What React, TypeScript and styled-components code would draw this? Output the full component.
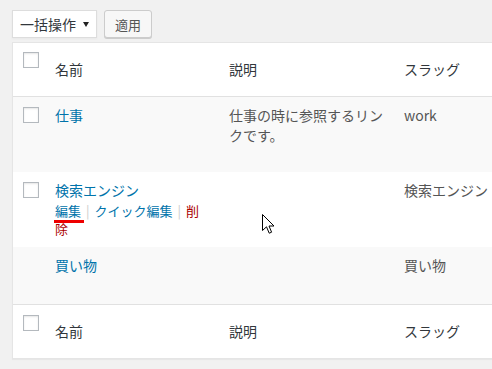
import React from "react";
import styled, { createGlobalStyle } from "styled-components";

const Global = createGlobalStyle`
  html, body {
    margin: 0;
    padding: 0;
    background: #f1f1f1;
    overflow: hidden;
  }
  body {
    font-family: "Noto Sans CJK JP", "Noto Sans", sans-serif;
    color: #444;
  }
`;

const Page = styled.div`
  position: relative;
  width: 492px;
  height: 369px;
  padding: 10px 0 0 12px;
  box-sizing: border-box;
`;

const Toolbar = styled.div`
  display: flex;
  align-items: center;
  gap: 7px;
  margin-bottom: 4px;
`;

const SelectBox = styled.div`
  box-sizing: border-box;
  width: 85px;
  height: 28px;
  display: flex;
  align-items: center;
  padding: 0 7px;
  background: #fff;
  border: 1px solid #ddd;
  box-shadow: 0 1px 2px rgba(0, 0, 0, 0.04);
  font-size: 14px;
  color: #32373c;
`;

const Caret = styled.span`
  margin-left: auto;
  width: 0;
  height: 0;
  border-left: 3.5px solid transparent;
  border-right: 3.5px solid transparent;
  border-top: 5px solid #222;
`;

const Button = styled.button`
  box-sizing: border-box;
  height: 28px;
  padding: 0 10px;
  font-family: inherit;
  font-size: 13px;
  color: #555;
  background: #f7f7f7;
  border: 1px solid #ccc;
  border-radius: 3px;
  box-shadow: 0 1px 0 #ccc;
`;

const Table = styled.table`
  width: 500px;
  table-layout: fixed;
  border-collapse: separate;
  border-spacing: 0;
  background: #fff;
  border: 1px solid #e5e5e5;
  box-shadow: 0 1px 1px rgba(0, 0, 0, 0.04);
`;

const HeadCell = styled.th<{ $w?: number; $foot?: boolean }>`
  box-sizing: border-box;
  width: ${(p) => (p.$w ? `${p.$w}px` : "auto")};
  padding: 16px 10px 17px;
  text-align: left;
  font-weight: 400;
  font-size: 14px;
  line-height: 20px;
  color: #32373c;
  white-space: nowrap;
  ${(p) =>
    p.$foot ? "border-top: 1px solid #e1e1e1;" : "border-bottom: 1px solid #e1e1e1;"}
`;

const CheckHead = styled(HeadCell)`
  vertical-align: top;
  padding: ${(p) => (p.$foot ? "10px" : "9px")} 0 0 10px;
`;

const Row = styled.tr<{ $alt?: boolean }>`
  background: ${(p) => (p.$alt ? "#f9f9f9" : "#fff")};
`;

const Cell = styled.td`
  box-sizing: border-box;
  vertical-align: top;
  padding: 8px 10px 9px;
  font-size: 14px;
  line-height: 20px;
  color: #555;
`;

const CheckCell = styled.td`
  box-sizing: border-box;
  vertical-align: top;
  padding: 10px 0 0 10px;
`;

const Checkbox = styled.span`
  display: block;
  box-sizing: border-box;
  width: 16px;
  height: 16px;
  background: #fff;
  border: 1px solid #b4b9be;
  box-shadow: inset 0 1px 2px rgba(0, 0, 0, 0.1);
`;

const NameLink = styled.a`
  color: #0073aa;
  text-decoration: none;
`;

const Actions = styled.div<{ $hidden?: boolean }>`
  visibility: ${(p) => (p.$hidden ? "hidden" : "visible")};
  padding-top: 2px;
  font-size: 13px;
  line-height: 18px;
  color: #ddd;
`;

const ActionLink = styled.a<{ $danger?: boolean; $marked?: boolean }>`
  position: relative;
  color: ${(p) => (p.$danger ? "#a00" : "#0073aa")};
  text-decoration: none;
  ${(p) =>
    p.$marked
      ? `display: inline-block;
  &::after {
    content: "";
    position: absolute;
    left: -1px;
    right: -3px;
    top: 18px;
    height: 3px;
    background: #e00;
  }`
      : ""}
`;

const Sep = styled.span`
  color: #ccc;
  padding: 0 5px 0 5px;
`;

const Cursor = styled.svg`
  position: absolute;
  left: 262px;
  top: 214px;
`;

type Term = {
  name: string;
  desc: string;
  slug: string;
  check: boolean;
  canDelete: boolean;
  showActions: boolean;
};

const terms: Term[] = [
  { name: "仕事", desc: "仕事の時に参照するリンクです。", slug: "work", check: true, canDelete: true, showActions: false },
  { name: "検索エンジン", desc: "", slug: "検索エンジン", check: true, canDelete: true, showActions: true },
  { name: "買い物", desc: "", slug: "買い物", check: false, canDelete: false, showActions: false },
];

const HeaderRow = ({ foot }: { foot?: boolean }) => (
  <tr>
    <CheckHead $w={32} $foot={foot}>
      <Checkbox />
    </CheckHead>
    <HeadCell $w={174} $foot={foot}>名前</HeadCell>
    <HeadCell $w={175} $foot={foot}>説明</HeadCell>
    <HeadCell $foot={foot}>スラッグ</HeadCell>
  </tr>
);

export default function App() {
  return (
    <>
      <Global />
      <Page>
        <Toolbar>
          <SelectBox>
            一括操作
            <Caret />
          </SelectBox>
          <Button>適用</Button>
        </Toolbar>
        <Table>
          <thead>
            <HeaderRow />
          </thead>
          <tbody>
            {terms.map((t, i) => (
              <Row key={t.slug} $alt={i % 2 === 0}>
                <CheckCell>{t.check && <Checkbox />}</CheckCell>
                <Cell>
                  <NameLink href="#">{t.name}</NameLink>
                  <Actions $hidden={!t.showActions}>
                    <ActionLink href="#" $marked={t.showActions}>編集</ActionLink>
                    <Sep>|</Sep>
                    <ActionLink href="#">クイック編集</ActionLink>
                    {t.canDelete && (
                      <>
                        <Sep>|</Sep>
                        <ActionLink href="#" $danger>削除</ActionLink>
                      </>
                    )}
                  </Actions>
                </Cell>
                <Cell>{t.desc}</Cell>
                <Cell>{t.slug}</Cell>
              </Row>
            ))}
          </tbody>
          <tfoot>
            <HeaderRow foot />
          </tfoot>
        </Table>
        <Cursor width="13" height="21" viewBox="0 0 13 21">
          <path
            d="M0.5 0.5 L0.5 16.5 L4.5 12.8 L7.2 19.2 L9.6 18.2 L7 12 L12 12 Z"
            fill="#fff"
            stroke="#000"
            strokeWidth="1"
            strokeLinejoin="miter"
          />
        </Cursor>
      </Page>
    </>
  );
}
